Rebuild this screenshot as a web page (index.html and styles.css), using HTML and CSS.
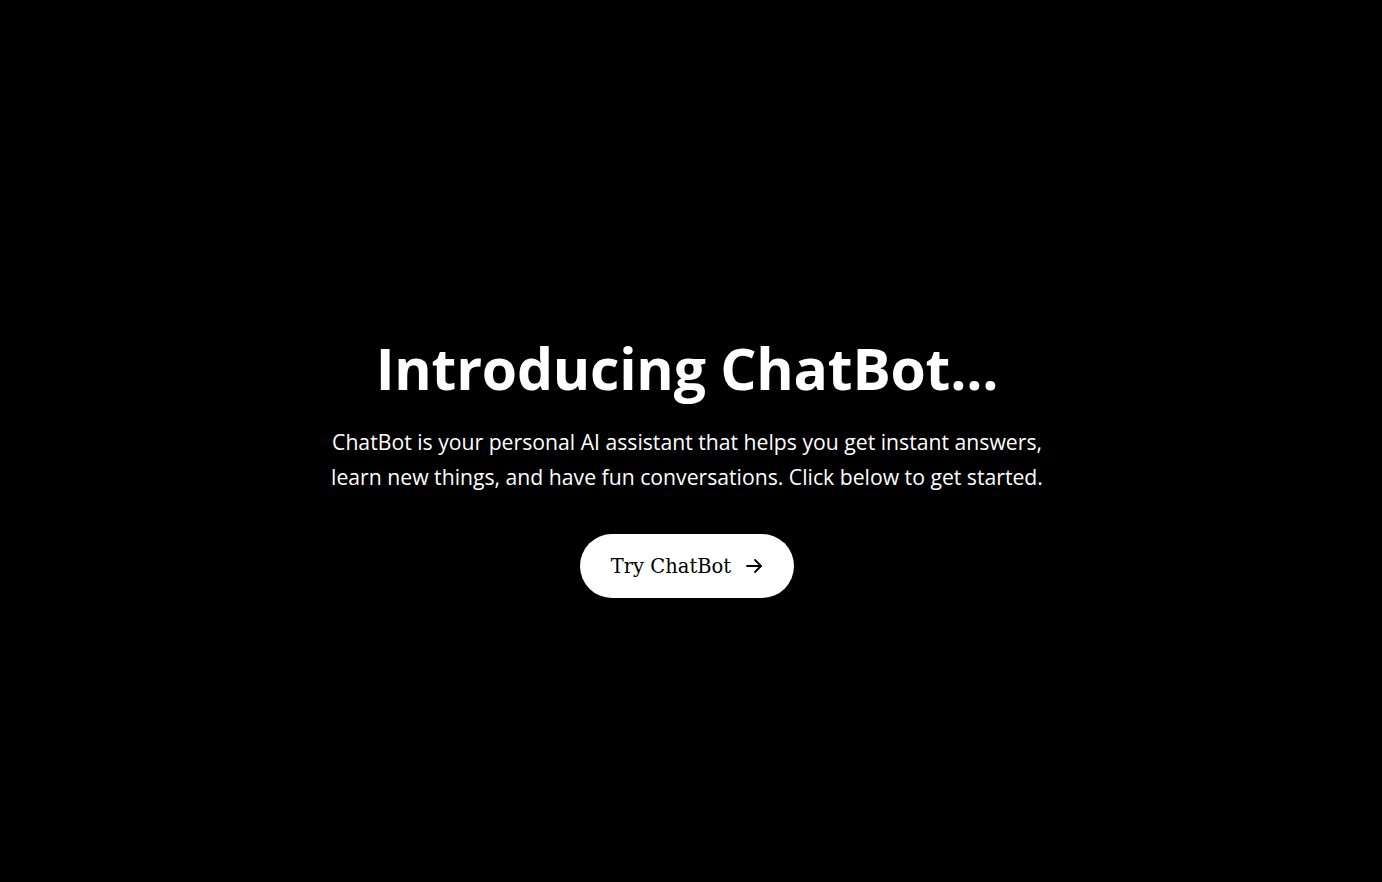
FILE: index.html
```html
<!DOCTYPE html>
<html lang="en">
<head>
<meta charset="utf-8">
<title>ChatBot</title>
<link rel="stylesheet" href="styles.css">
</head>
<body>
<main class="hero">
  <h1 class="title">Introducing ChatBot...</h1>
  <p class="lead">ChatBot is your personal AI assistant that helps you get instant answers,<br>learn new things, and have fun conversations. Click below to get started.</p>
  <button class="cta">Try ChatBot
    <svg class="arrow" width="18" height="18" viewBox="0 0 18 18" fill="none" stroke="currentColor" stroke-width="1.8" stroke-linecap="round" stroke-linejoin="round"><path d="M2 9h14"/><path d="M10 3l6 6-6 6"/></svg>
  </button>
</main>
</body>
</html>
```
FILE: styles.css
```css
html, body {
  margin: 0;
  padding: 0;
  background: #000;
}
.hero {
  min-height: 882px;
  box-sizing: border-box;
  display: flex;
  flex-direction: column;
  align-items: center;
  justify-content: center;
  padding-top: 50px;
  padding-right: 8px;
  color: #fff;
  font-family: "Open Sans", "Noto Sans", sans-serif;
  text-align: center;
}
.title {
  margin: 0;
  font-size: 57px;
  font-weight: 700;
  line-height: 1.2;
  letter-spacing: -0.2px;
}
.lead {
  margin: 22px 0 0;
  font-size: 21.2px;
  line-height: 35px;
  letter-spacing: 0;
}
.cta {
  margin-top: 40px;
  display: flex;
  align-items: center;
  gap: 14px;
  height: 64px;
  padding: 0 31px;
  border: none;
  border-radius: 32px;
  background: #fff;
  color: #000;
  font-family: "DejaVu Serif", "Liberation Serif", serif;
  font-size: 19.5px;
  cursor: pointer;
}
.arrow {
  display: block;
}
```
